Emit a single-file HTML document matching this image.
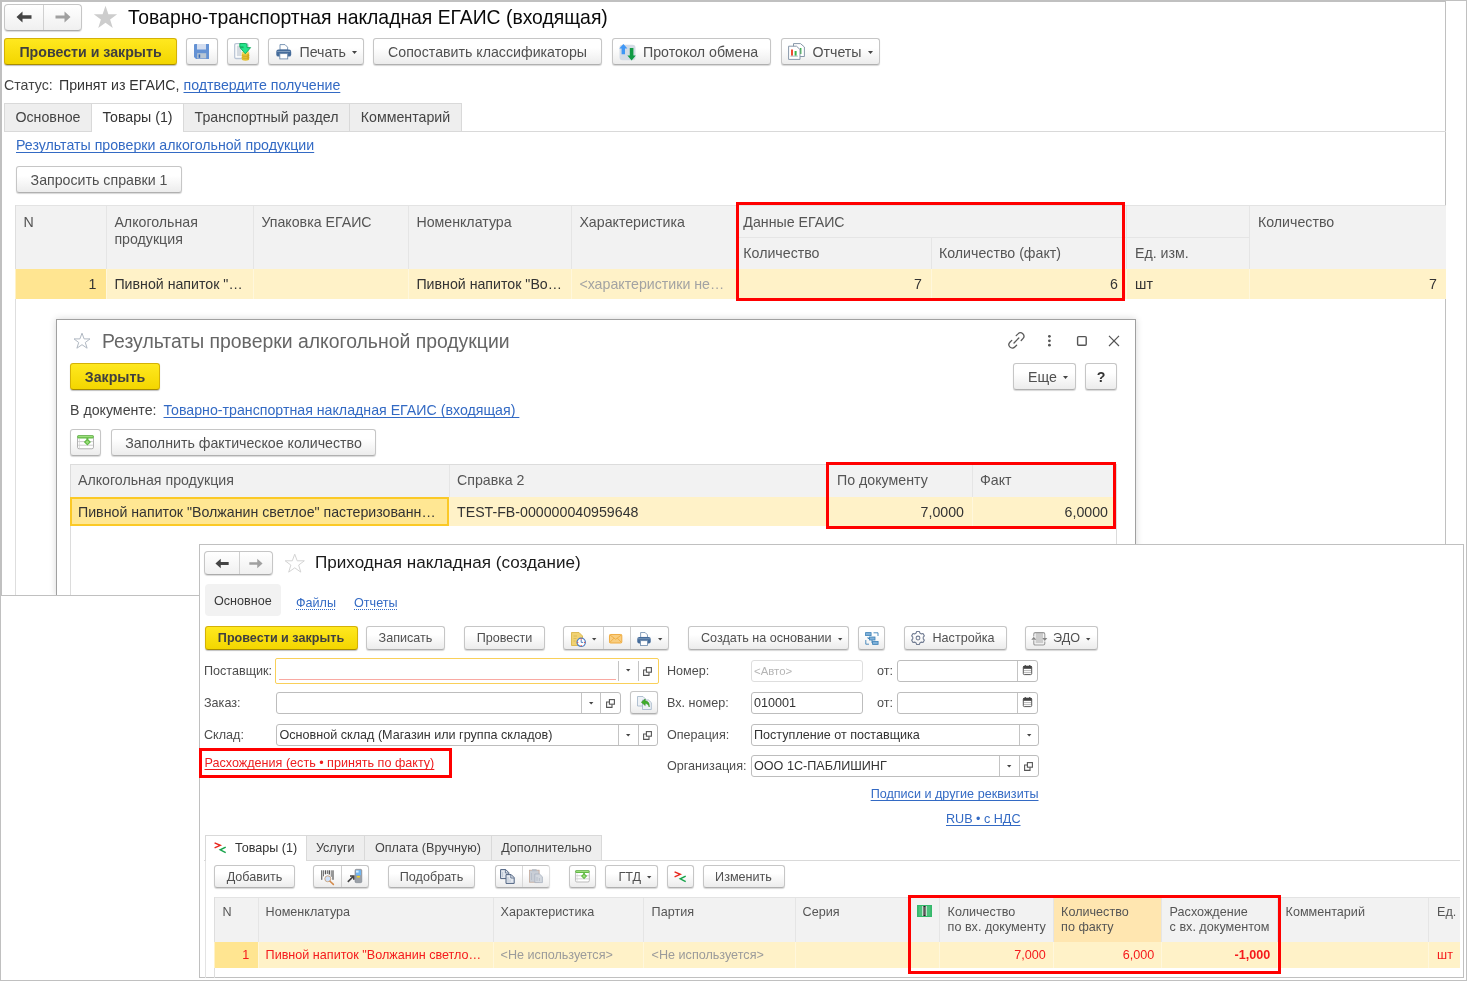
<!DOCTYPE html>
<html lang="ru">
<head>
<meta charset="utf-8">
<title>Товарно-транспортная накладная ЕГАИС (входящая)</title>
<style>
html,body{margin:0;padding:0;background:#fff;}
body{width:1467px;height:981px;overflow:hidden;font-family:"Liberation Sans",sans-serif;}
#root{will-change:transform;position:relative;width:1467px;height:981px;overflow:hidden;background:#fff;}
#root div{position:absolute;box-sizing:border-box;white-space:nowrap;}
#root svg{position:absolute;overflow:visible;}
.t{color:#333;}
.btn{border:1px solid #c6c6c6;border-bottom-color:#b0b0b0;border-radius:3px;background:linear-gradient(#ffffff 35%,#ececec);box-shadow:0 1px 1px rgba(0,0,0,.16);color:#505050;text-align:center;}
.ybtn{border:1px solid #d4b106;border-bottom-color:#a88c00;border-radius:3px;background:linear-gradient(#ffe81f,#f3d600);box-shadow:0 1px 1px rgba(0,0,0,.25);color:#3f3f3f;text-align:center;font-weight:bold;}
.lnk{text-decoration:underline;text-decoration-skip-ink:none;text-underline-offset:1.8px;text-decoration-thickness:1px;}
.dlnk{text-decoration:underline dotted;text-decoration-thickness:1px;text-decoration-skip-ink:none;text-underline-offset:2.3px;}
.inp{border:1px solid #bdbdbd;border-radius:3px;background:#fff;}
.tab{background:#eeeeee;border:1px solid #d9d9d9;text-align:center;color:#444;}
.tabA{background:#fff;border:1px solid #d9d9d9;border-bottom:none;text-align:center;color:#333;}
.red{border:3px solid #f00;}
</style>
</head>
<body>
<div id="root">
<div style="left:0px;top:0px;width:1467px;height:981px;background:#fff;"></div>
<div style="left:0px;top:0px;width:1446px;height:596px;background:#fff;border:1px solid #c0c0c0;border-left-width:2px;border-top-width:2px;"></div>
<div style="left:4px;top:4px;width:78px;height:27px;border:1px solid #c6c6c6;border-bottom-color:#ababab;border-radius:4px;background:linear-gradient(#fff,#f0f0f0);box-shadow:0 1px 1px rgba(0,0,0,.15);"></div>
<div style="left:43px;top:5px;width:1px;height:25px;background:#d0d0d0;"></div>
<svg style="left:16px;top:11px" width="17" height="12" viewBox="0 0 17 12"><path d="M0.5 6 L6.5 0.5 V4.2 H15.5 V7.8 H6.5 V11.5 Z" fill="#444"/></svg>
<svg style="left:54px;top:11px" width="17" height="12" viewBox="0 0 17 12"><path d="M16.5 6 L10.5 0.5 V4.6 H1.5 V7.4 H10.5 V11.5 Z" fill="#a0a0a0"/></svg>
<svg style="left:93px;top:5px" width="25" height="24" viewBox="0 0 25 24"><path d="M12.5 0.8 L15.4 9.2 H24.2 L17.1 14.4 L19.8 23 L12.5 17.8 L5.2 23 L7.9 14.4 L0.8 9.2 H9.6 Z" fill="#cdcdcd"/></svg>
<div class="t" style="left:128px;top:5.10px;font-size:19.35px;line-height:25px;color:#0a0a0a;">Товарно-транспортная накладная ЕГАИС (входящая)</div>
<div class="ybtn" style="left:4px;top:38px;width:173px;height:27px;line-height:26px;font-size:14.2px;">Провести и закрыть</div>
<div class="btn" style="left:186px;top:38px;width:32px;height:27px;line-height:26px;font-size:14.2px;"></div>
<svg style="left:194px;top:44px" width="15" height="15" viewBox="0 0 15 15"><path d="M0.5 0 H15 V15 H2 L0 13 V0.5 Z" fill="#6492d4"/><rect x="3" y="0" width="9" height="5.5" fill="#d3ddef"/><rect x="3.2" y="9.2" width="9" height="5.2" fill="#b9c6d3"/><rect x="4.6" y="10.4" width="1.6" height="3.4" fill="#3a6ab3"/></svg>
<div class="btn" style="left:227px;top:38px;width:32px;height:27px;line-height:26px;font-size:14.2px;"></div>
<svg style="left:233.8px;top:42.8px" width="17" height="18" viewBox="0 0 17 18"><rect x="0.7" y="0.7" width="13.2" height="14.8" rx="1.3" fill="#fff" stroke="#b9c5d5" stroke-width="1.3"/><rect x="2.8" y="2.6" width="4.6" height="10.6" fill="#d4dae1"/><path d="M7.8 9.8 V16 A3.7 1.7 0 0 0 15.2 16 V9.8 Z" fill="#e3c033"/><ellipse cx="11.5" cy="9.8" rx="3.7" ry="1.5" fill="#f3da66"/><path d="M7.8 12 A3.7 1.5 0 0 0 15.2 12 M7.8 14 A3.7 1.5 0 0 0 15.2 14" stroke="#c9a21c" stroke-width=".6" fill="none"/><rect x="13.4" y="10.5" width="1.4" height="6" fill="#c99a14" opacity=".6"/><path d="M5.8 0.5 H11.4 Q13 0.5 13 2.2 V4.6 H16.6 L11.3 10.8 L6 4.6 H9.3 V3.9 H5.8 Z" fill="#25e48c" stroke="#10a95a" stroke-width=".9" stroke-linejoin="round"/></svg>
<div class="btn" style="left:268px;top:38px;width:96px;height:27px;line-height:26px;font-size:14.2px;text-align:left;padding-left:30.5px;">Печать</div>
<svg style="left:276px;top:44px" width="15.5" height="15.5" viewBox="0 0 15.5 15.5"><path d="M4 6 V0.6 H9 L11.6 3.2 V6 Z" fill="#fff" stroke="#6d8bad" stroke-width=".9"/><rect x="0.3" y="5.6" width="14.9" height="7" rx="2.2" fill="#456c9b"/><rect x="1.2" y="7" width="13" height="1" fill="#7f9cbd"/><rect x="3.8" y="9.6" width="7.9" height="5.3" fill="#fff" stroke="#6d8bad" stroke-width=".9"/></svg>
<svg style="left:351.5px;top:51px" width="5" height="3" viewBox="0 0 5 3"><path d="M0 0 H5 L2.5 3 Z" fill="#444"/></svg>
<div class="btn" style="left:373px;top:38px;width:229px;height:27px;line-height:26px;font-size:14.2px;">Сопоставить классификаторы</div>
<div class="btn" style="left:612px;top:38px;width:159px;height:27px;line-height:26px;font-size:14.2px;text-align:left;padding-left:30px;">Протокол обмена</div>
<svg style="left:618.6px;top:43.6px" width="17" height="17" viewBox="0 0 17 17"><rect x="0.5" y="0.8" width="16" height="15.5" rx="3" fill="#d3dbe5"/><path d="M4.4 0 L8.4 4.6 H6 V10.2 H2.6 V4.6 H0.3 Z" fill="#3f97f6"/><path d="M12.6 16.6 L8.4 11.6 H10.8 V4 H14.4 V11.6 H16.8 Z" fill="#119b45"/></svg>
<div class="btn" style="left:781px;top:38px;width:99px;height:27px;line-height:26px;font-size:14.2px;text-align:left;padding-left:30.5px;">Отчеты</div>
<svg style="left:788px;top:43.4px" width="17" height="17" viewBox="0 0 17 17"><path d="M5.5 0.6 H12.5 L16.4 4 V13.5 H5.5 Z" fill="#fff" stroke="#8797a8" stroke-width="1"/><rect x="12" y="5" width="1.4" height="6" fill="#3db54a"/><path d="M0.6 3.2 H8.5 L12 6.5 V16.4 H0.6 Z" fill="#fff" stroke="#8797a8" stroke-width="1"/><rect x="3" y="6.5" width="2" height="6.2" fill="#ee4b32"/><rect x="6.6" y="8" width="2" height="4.7" fill="#3db54a"/><rect x="2.4" y="12.7" width="7.5" height=".8" fill="#9aa"/></svg>
<svg style="left:867.6px;top:51px" width="5" height="3" viewBox="0 0 5 3"><path d="M0 0 H5 L2.5 3 Z" fill="#444"/></svg>
<div class="t" style="left:4px;top:75.58px;font-size:14.2px;line-height:18px;color:#444;">Статус:</div>
<div class="t" style="left:59px;top:75.58px;font-size:14.2px;line-height:18px;color:#333;">Принят из ЕГАИС,</div>
<div class="t lnk" style="left:183.5px;top:75.58px;font-size:14.2px;line-height:18px;color:#336ac4;">подтвердите получение</div>
<div style="left:4px;top:131px;width:1442px;height:1px;background:#d9d9d9;"></div>
<div class="tab" style="left:4px;top:103px;width:88px;height:29px;line-height:27px;font-size:14.2px;">Основное</div>
<div class="tabA" style="left:91px;top:103px;width:93px;height:29px;line-height:27px;font-size:14.2px;">Товары (1)</div>
<div class="tab" style="left:183px;top:103px;width:167px;height:29px;line-height:27px;font-size:14.2px;">Транспортный раздел</div>
<div class="tab" style="left:349px;top:103px;width:113px;height:29px;line-height:27px;font-size:14.2px;">Комментарий</div>
<div class="t lnk" style="left:16px;top:135.58px;font-size:14.2px;line-height:18px;color:#336ac4;">Результаты проверки алкогольной продукции</div>
<div class="btn" style="left:16px;top:166px;width:166px;height:27px;line-height:26px;font-size:14.2px;">Запросить справки 1</div>
<div style="left:15px;top:205px;width:1431px;height:64px;background:#f2f2f2;border-top:1px solid #e3e3e3;"></div>
<div style="left:15px;top:205px;width:1px;height:391px;background:#dedede;"></div>
<div style="left:15px;top:269px;width:1431px;height:30px;background:#fff2c8;"></div>
<div style="left:16px;top:269px;width:90px;height:30px;background:#ffe591;"></div>
<div style="left:106px;top:206px;width:1px;height:63px;background:#e5e5e5;"></div>
<div style="left:106px;top:269px;width:1px;height:30px;background:#fff7dc;"></div>
<div style="left:253px;top:206px;width:1px;height:63px;background:#e5e5e5;"></div>
<div style="left:253px;top:269px;width:1px;height:30px;background:#fff7dc;"></div>
<div style="left:408px;top:206px;width:1px;height:63px;background:#e5e5e5;"></div>
<div style="left:408px;top:269px;width:1px;height:30px;background:#fff7dc;"></div>
<div style="left:571px;top:206px;width:1px;height:63px;background:#e5e5e5;"></div>
<div style="left:571px;top:269px;width:1px;height:30px;background:#fff7dc;"></div>
<div style="left:737px;top:206px;width:1px;height:63px;background:#e5e5e5;"></div>
<div style="left:737px;top:269px;width:1px;height:30px;background:#fff7dc;"></div>
<div style="left:1126px;top:206px;width:1px;height:63px;background:#e5e5e5;"></div>
<div style="left:1126px;top:269px;width:1px;height:30px;background:#fff7dc;"></div>
<div style="left:1249px;top:206px;width:1px;height:63px;background:#e5e5e5;"></div>
<div style="left:1249px;top:269px;width:1px;height:30px;background:#fff7dc;"></div>
<div style="left:931px;top:237px;width:1px;height:32px;background:#e5e5e5;"></div>
<div style="left:931px;top:269px;width:1px;height:30px;background:#fff7dc;"></div>
<div style="left:737px;top:237px;width:512px;height:1px;background:#e5e5e5;"></div>
<div class="t" style="left:23.4px;top:212.98px;font-size:14.2px;line-height:18px;color:#555;">N</div>
<div class="t" style="left:114.4px;top:212.98px;font-size:14.2px;line-height:18px;color:#555;">Алкогольная</div>
<div class="t" style="left:114.4px;top:230.18px;font-size:14.2px;line-height:18px;color:#555;">продукция</div>
<div class="t" style="left:261.4px;top:212.98px;font-size:14.2px;line-height:18px;color:#555;">Упаковка ЕГАИС</div>
<div class="t" style="left:416.4px;top:212.98px;font-size:14.2px;line-height:18px;color:#555;">Номенклатура</div>
<div class="t" style="left:579.4px;top:212.98px;font-size:14.2px;line-height:18px;color:#555;">Характеристика</div>
<div class="t" style="left:743.3px;top:212.98px;font-size:14.2px;line-height:18px;color:#555;">Данные ЕГАИС</div>
<div class="t" style="left:743.3px;top:244.48px;font-size:14.2px;line-height:18px;color:#555;">Количество</div>
<div class="t" style="left:939px;top:244.48px;font-size:14.2px;line-height:18px;color:#555;">Количество (факт)</div>
<div class="t" style="left:1135px;top:244.48px;font-size:14.2px;line-height:18px;color:#555;">Ед. изм.</div>
<div class="t" style="left:1258px;top:212.98px;font-size:14.2px;line-height:18px;color:#555;">Количество</div>
<div class="t" style="right:1370.5px;top:275.18px;font-size:14.2px;line-height:18px;color:#333;">1</div>
<div class="t" style="left:114.4px;top:275.18px;font-size:14.2px;line-height:18px;color:#333;">Пивной напиток "…</div>
<div class="t" style="left:416.4px;top:275.18px;font-size:14.2px;line-height:18px;color:#333;">Пивной напиток "Во…</div>
<div class="t" style="left:579.4px;top:275.18px;font-size:14.2px;line-height:18px;color:#a3a3a3;">&lt;характеристики не…</div>
<div class="t" style="right:545px;top:275.18px;font-size:14.2px;line-height:18px;color:#333;">7</div>
<div class="t" style="right:349px;top:275.18px;font-size:14.2px;line-height:18px;color:#333;">6</div>
<div class="t" style="left:1135px;top:275.18px;font-size:14.2px;line-height:18px;color:#333;">шт</div>
<div class="t" style="right:30px;top:275.18px;font-size:14.2px;line-height:18px;color:#333;">7</div>
<div class="red" style="left:736px;top:202px;width:389px;height:99px;"></div>
<div style="left:56px;top:319px;width:1080px;height:277px;background:#fff;border:1px solid #a0a0a0;border-bottom:none;box-shadow:0 0 7px rgba(0,0,0,.16);"></div>
<svg style="left:73px;top:332px" width="18" height="17" viewBox="0 0 18 17"><path d="M9 1.2 L11.1 6.9 H17 L12.3 10.5 L14.1 16.2 L9 12.7 L3.9 16.2 L5.7 10.5 L1 6.9 H6.9 Z" fill="none" stroke="#b0b8c2" stroke-width="1"/></svg>
<div class="t" style="left:102px;top:328.78px;font-size:19.4px;line-height:25px;color:#666;">Результаты проверки алкогольной продукции</div>
<div class="ybtn" style="left:70px;top:363px;width:90px;height:27px;line-height:26px;font-size:14.2px;">Закрыть</div>
<div class="btn" style="left:1013px;top:363px;width:63px;height:27px;line-height:26px;font-size:14.2px;text-align:left;padding-left:14px;">Еще</div>
<svg style="left:1063.4px;top:376px" width="5" height="3" viewBox="0 0 5 3"><path d="M0 0 H5 L2.5 3 Z" fill="#444"/></svg>
<svg style="left:1008px;top:332px" width="17" height="17" viewBox="0 0 17 17"><g fill="none" stroke="#5a5a5a" stroke-width="1.3" stroke-linecap="round"><path d="M8.2 3.6 L10 1.9 A3.2 3.2 0 0 1 14.9 6.6 L13.2 8.5"/><path d="M8.6 13.3 L6.8 15 A3.2 3.2 0 0 1 1.9 10.3 L3.8 8.4"/><path d="M6 11 L10.8 6"/></g></svg>
<svg style="left:1047px;top:334px" width="5" height="13" viewBox="0 0 5 13"><circle cx="2.4" cy="2.3" r="1.4" fill="#555"/><circle cx="2.4" cy="6.8" r="1.4" fill="#555"/><circle cx="2.4" cy="11.2" r="1.4" fill="#555"/></svg>
<svg style="left:1076px;top:335px" width="12" height="12" viewBox="0 0 12 12"><rect x="1.6" y="1.6" width="8.6" height="8.6" rx="1" fill="none" stroke="#555" stroke-width="1.4"/></svg>
<svg style="left:1108px;top:335px" width="12" height="12" viewBox="0 0 12 12"><path d="M1 0.8 L11 11 M11 0.8 L1 11" stroke="#555" stroke-width="1.2" fill="none"/></svg>
<div class="btn" style="left:1085px;top:363px;width:32px;height:27px;line-height:26px;font-size:14.2px;font-weight:bold;color:#333;">?</div>
<div class="t" style="left:70px;top:400.58px;font-size:14.2px;line-height:18px;color:#444;">В документе:</div>
<div class="t lnk" style="left:163.5px;top:400.58px;font-size:14.2px;line-height:18px;color:#336ac4;white-space:pre;">Товарно-транспортная накладная ЕГАИС (входящая) </div>
<div class="btn" style="left:70px;top:429px;width:31px;height:27px;line-height:26px;font-size:14.2px;"></div>
<svg style="left:77px;top:435.4px" width="17.0" height="14.4" viewBox="0 0 17 14.4"><rect x="0.5" y="0.6" width="16" height="13.2" rx="1.6" fill="#fff" stroke="#a9a9a9" stroke-width=".9"/><path d="M1.2 6.6 H15.8 M1.2 10.2 H15.8" stroke="#c4c4c4" stroke-width=".9"/><path d="M2.4 4 V13" stroke="#d0d0d0" stroke-width=".7"/><rect x="0.2" y="0.2" width="16.6" height="3.2" rx="1.3" fill="#62b946"/><rect x="1.2" y="1.1" width="14.6" height="1.1" rx=".5" fill="#9de07c"/><path d="M9.4 3 H11.4 V4.6 L14 7 L10.4 10.6 L6.8 7 L9.4 4.6 Z" fill="#62b946"/><path d="M10.4 5.4 L12.3 7.1 L10.4 9 L8.5 7.1 Z" fill="#9de07c"/></svg>
<div class="btn" style="left:111px;top:429px;width:265px;height:27px;line-height:26px;font-size:14.2px;">Заполнить фактическое количество</div>
<div style="left:70px;top:464px;width:1047px;height:132px;border:1px solid #dcdcdc;border-bottom:none;background:#fff;"></div>
<div style="left:71px;top:465px;width:1045px;height:32px;background:#f2f2f2;"></div>
<div style="left:71px;top:497px;width:1045px;height:29px;background:#fff2c8;"></div>
<div style="left:70px;top:497px;width:379px;height:29px;background:#ffe793;border:2px solid #fbc926;"></div>
<div style="left:449px;top:465px;width:1px;height:32px;background:#e5e5e5;"></div>
<div style="left:828px;top:465px;width:1px;height:32px;background:#e5e5e5;"></div>
<div style="left:828px;top:497px;width:1px;height:29px;background:#fff7dc;"></div>
<div style="left:972px;top:465px;width:1px;height:32px;background:#e5e5e5;"></div>
<div style="left:972px;top:497px;width:1px;height:29px;background:#fff7dc;"></div>
<div class="t" style="left:78px;top:471.08px;font-size:14.2px;line-height:18px;color:#555;">Алкогольная продукция</div>
<div class="t" style="left:457px;top:471.08px;font-size:14.2px;line-height:18px;color:#555;">Справка 2</div>
<div class="t" style="left:837px;top:471.08px;font-size:14.2px;line-height:18px;color:#555;">По документу</div>
<div class="t" style="left:980px;top:471.08px;font-size:14.2px;line-height:18px;color:#555;">Факт</div>
<div class="t" style="left:78px;top:503.08px;font-size:14.2px;line-height:18px;color:#333;">Пивной напиток "Волжанин светлое" пастеризованн…</div>
<div class="t" style="left:457px;top:503.08px;font-size:14.2px;line-height:18px;color:#333;">TEST-FB-000000040959648</div>
<div class="t" style="right:503px;top:503.08px;font-size:14.2px;line-height:18px;color:#333;">7,0000</div>
<div class="t" style="right:359px;top:503.08px;font-size:14.2px;line-height:18px;color:#333;">6,0000</div>
<div class="red" style="left:826px;top:462px;width:290px;height:67px;"></div>
<div style="left:0px;top:596px;width:200px;height:385px;background:#fff;"></div>
<div style="left:0px;top:595px;width:200px;height:1px;background:#c0c0c0;"></div>
<div style="left:199px;top:544px;width:1265px;height:434px;background:#fff;border:1px solid #c0c0c0;"></div>
<div style="left:204px;top:551px;width:69px;height:24px;border:1px solid #c6c6c6;border-bottom-color:#ababab;border-radius:4px;background:linear-gradient(#fff,#f0f0f0);box-shadow:0 1px 1px rgba(0,0,0,.15);"></div>
<div style="left:239px;top:552px;width:1px;height:22px;background:#d0d0d0;"></div>
<svg style="left:215px;top:557.5px" width="15" height="11" viewBox="0 0 17 12"><path d="M0.5 6 L6.5 0.5 V4.2 H15.5 V7.8 H6.5 V11.5 Z" fill="#444"/></svg>
<svg style="left:248px;top:557.5px" width="15" height="11" viewBox="0 0 17 12"><path d="M16.5 6 L10.5 0.5 V4.6 H1.5 V7.4 H10.5 V11.5 Z" fill="#a0a0a0"/></svg>
<svg style="left:283.5px;top:553px" width="21.5" height="20.5" viewBox="0 0 22 21"><path d="M11 1.2 L13.5 8 H20.8 L15 12.4 L17.2 19.6 L11 15.2 L4.8 19.6 L7 12.4 L1.2 8 H8.5 Z" fill="none" stroke="#d2d2d2" stroke-width="1"/></svg>
<div class="t" style="left:315px;top:551.67px;font-size:17.1px;line-height:22px;color:#1a1a1a;">Приходная накладная (создание)</div>
<div style="left:204.5px;top:584px;width:76.0px;height:32px;background:#f2f2f2;border-radius:4px;"></div>
<div class="t" style="left:214px;top:592.63px;font-size:12.6px;line-height:16px;color:#3a3a3a;">Основное</div>
<div class="t dlnk" style="left:296px;top:594.63px;font-size:12.6px;line-height:16px;color:#336ac4;">Файлы</div>
<div class="t dlnk" style="left:354px;top:594.63px;font-size:12.6px;line-height:16px;color:#336ac4;">Отчеты</div>
<div class="ybtn" style="left:204.5px;top:626px;width:153.0px;height:24px;line-height:23px;font-size:12.6px;">Провести и закрыть</div>
<div class="btn" style="left:366px;top:626px;width:79px;height:24px;line-height:23px;font-size:12.6px;">Записать</div>
<div class="btn" style="left:464px;top:626px;width:81px;height:24px;line-height:23px;font-size:12.6px;">Провести</div>
<div class="btn" style="left:563px;top:626px;width:106px;height:24px;line-height:23px;font-size:12.6px;"></div>
<div style="left:602.5px;top:627px;width:1.0px;height:22px;background:#cfcfcf;"></div>
<div style="left:630px;top:627px;width:1px;height:22px;background:#cfcfcf;"></div>
<svg style="left:571px;top:631.5px" width="15" height="15" viewBox="0 0 15 15"><path d="M0.5 0.5 H8 L11.5 4 V13.5 H0.5 Z" fill="#f1d272" stroke="#d9b64a" stroke-width=".9"/><path d="M2.5 4 H6 M2.5 6.5 H5.5 M2.5 9 H4.5" stroke="#d6b550" stroke-width=".8"/><circle cx="10.2" cy="10.3" r="4.2" fill="#fff" stroke="#4f7fc0" stroke-width="1.2"/><path d="M10.2 7.6 V10.4 H12.2" stroke="#4f7fc0" stroke-width="1" fill="none"/><g fill="#e53935"><circle cx="10.2" cy="6.9" r=".6"/><circle cx="10.2" cy="13.7" r=".6"/><circle cx="6.8" cy="10.3" r=".6"/><circle cx="13.6" cy="10.3" r=".6"/></g></svg>
<svg style="left:591.8px;top:638.3px" width="4.4" height="2.6" viewBox="0 0 4.4 2.6"><path d="M0 0 H4.4 L2.2 2.6 Z" fill="#444"/></svg>
<svg style="left:609px;top:633.5px" width="13.3" height="9.5" viewBox="0 0 14 10"><rect x="0.5" y="0.5" width="13" height="9" rx="1.2" fill="#f8cd80" stroke="#eeaa3c" stroke-width="1"/><path d="M0.8 0.9 L7 5.6 L13.2 0.9 M0.8 9 L5.2 4.4 M13.2 9 L8.8 4.4" fill="none" stroke="#eeaa3c" stroke-width=".9"/></svg>
<svg style="left:636.5px;top:632px" width="14.0" height="14.0" viewBox="0 0 15.5 15.5"><path d="M4 6 V0.6 H9 L11.6 3.2 V6 Z" fill="#fff" stroke="#6d8bad" stroke-width=".9"/><rect x="0.3" y="5.6" width="14.9" height="7" rx="2.2" fill="#456c9b"/><rect x="1.2" y="7" width="13" height="1" fill="#7f9cbd"/><rect x="3.8" y="9.6" width="7.9" height="5.3" fill="#fff" stroke="#6d8bad" stroke-width=".9"/></svg>
<svg style="left:658.2px;top:638.3px" width="4.4" height="2.6" viewBox="0 0 4.4 2.6"><path d="M0 0 H4.4 L2.2 2.6 Z" fill="#444"/></svg>
<div class="btn" style="left:688px;top:626px;width:161px;height:24px;line-height:23px;font-size:12.6px;text-align:left;padding-left:12px;">Создать на основании</div>
<svg style="left:838px;top:638.3px" width="4.4" height="2.6" viewBox="0 0 4.4 2.6"><path d="M0 0 H4.4 L2.2 2.6 Z" fill="#444"/></svg>
<div class="btn" style="left:858px;top:626px;width:27px;height:24px;line-height:23px;font-size:14.2px;"></div>
<svg style="left:864.6px;top:632px" width="14" height="13" viewBox="0 0 14 13"><g fill="#7fb0d8" stroke="#3d82b8" stroke-width=".8"><rect x="0.6" y="0.6" width="5.5" height="3"/><rect x="4.5" y="5" width="5.5" height="3"/><rect x="7.6" y="9.4" width="5.5" height="3"/></g><path d="M8.5 0.8 H13 V4 M3 5 V6.5 H4.5 M7 8 V11 H7.6 M0.8 8 V12.2 H4" fill="none" stroke="#3d82b8" stroke-width=".9"/></svg>
<div class="btn" style="left:904px;top:626px;width:103px;height:24px;line-height:23px;font-size:12.6px;text-align:left;padding-left:27.5px;">Настройка</div>
<svg style="left:911px;top:631.4px" width="14" height="14" viewBox="0 0 14 14"><path d="M5.13 2.04 L5.67 0.43 L8.33 0.43 L8.87 2.04 L10.36 2.90 L12.02 2.56 L13.35 4.87 L12.23 6.14 L12.23 7.86 L13.35 9.13 L12.02 11.44 L10.36 11.10 L8.87 11.96 L8.33 13.57 L5.67 13.57 L5.13 11.96 L3.64 11.10 L1.98 11.44 L0.65 9.13 L1.77 7.86 L1.77 6.14 L0.65 4.87 L1.98 2.56 L3.64 2.90 Z" fill="none" stroke="#737e94" stroke-width="1.1" stroke-linejoin="round"/><circle cx="7.0" cy="7.0" r="1.9" fill="none" stroke="#737e94" stroke-width="1.05"/></svg>
<div class="btn" style="left:1025px;top:626px;width:72.5px;height:24px;line-height:23px;font-size:12.6px;text-align:left;padding-left:27px;">ЭДО</div>
<svg style="left:1032px;top:631.7px" width="14.6" height="13.6" viewBox="0 0 14.6 13.6"><rect x="3.6" y="0.7" width="7.6" height="10.4" fill="#cccccc"/><path d="M3.4 0.6 H11.2 Q12.8 0.6 12.8 2.2 V6.4 M12.8 9.4 V11.4 Q12.8 13 11.2 13 H3.4 Q1.8 13 1.8 11.4 V8.2 M1.8 4.6 V2.2 Q1.8 0.6 3.4 0.6" fill="none" stroke="#9a9a9a" stroke-width="1.1"/><path d="M-0.7 7.7 L1.8 4.8 L4.3 7.7 Z M10.3 6 L12.8 8.9 L15.3 6 Z" fill="#858585"/></svg>
<svg style="left:1086.4px;top:638.3px" width="4.4" height="2.6" viewBox="0 0 4.4 2.6"><path d="M0 0 H4.4 L2.2 2.6 Z" fill="#444"/></svg>
<div class="t" style="left:204px;top:662.63px;font-size:12.6px;line-height:16px;color:#4d4d4d;">Поставщик:</div>
<div style="left:275px;top:657.5px;width:384px;height:26.5px;border:1.5px solid #f9d05a;border-radius:2px;background:#fff;"></div>
<div style="left:279px;top:679px;width:337px;height:1px;background:#f9a9a2;"></div>
<div style="left:618px;top:661px;width:1px;height:20px;background:#c4c4c4;"></div>
<div style="left:637.5px;top:661px;width:1.0px;height:20px;background:#c4c4c4;"></div>
<svg style="left:626px;top:669.3px" width="4.4" height="2.6" viewBox="0 0 4.4 2.6"><path d="M0 0 H4.4 L2.2 2.6 Z" fill="#444"/></svg>
<svg style="left:643px;top:666.5px" width="9" height="9" viewBox="0 0 9 9"><g fill="none" stroke="#555" stroke-width="1.1"><rect x="3.4" y="0.6" width="5" height="4.6"/><path d="M3.2 3 H0.6 V8.4 H6 V5.4"/></g></svg>
<div class="t" style="left:667px;top:662.63px;font-size:12.6px;line-height:16px;color:#4d4d4d;">Номер:</div>
<div style="left:751px;top:660px;width:112px;height:22px;border:1px solid #dedede;border-radius:3px;background:#fff;"></div>
<div class="t" style="left:754px;top:663.55px;font-size:11.4px;line-height:15px;color:#b5b5b5;">&lt;Авто&gt;</div>
<div class="t" style="left:877px;top:662.93px;font-size:12.6px;line-height:16px;color:#4d4d4d;">от:</div>
<div class="inp" style="left:897px;top:660px;width:141px;height:22px;"></div>
<div style="left:1017px;top:661px;width:1px;height:20px;background:#c4c4c4;"></div>
<svg style="left:1022.8px;top:665.3px" width="9" height="10" viewBox="0 0 9 10"><rect x="0.3" y="1.2" width="8.4" height="8.4" rx="1" fill="#fff" stroke="#555" stroke-width="1"/><rect x="0.3" y="1" width="8.4" height="2.8" fill="#444"/><rect x="1.8" y="0" width="1" height="2" fill="#444"/><rect x="6.2" y="0" width="1" height="2" fill="#444"/><path d="M1 5.6 H8 M1 7.6 H8" stroke="#999" stroke-width=".7"/></svg>
<div class="t" style="left:204px;top:694.63px;font-size:12.6px;line-height:16px;color:#4d4d4d;">Заказ:</div>
<div class="inp" style="left:276px;top:692px;width:345px;height:22px;"></div>
<div style="left:581px;top:693px;width:1px;height:20px;background:#c4c4c4;"></div>
<div style="left:600px;top:693px;width:1px;height:20px;background:#c4c4c4;"></div>
<svg style="left:588.5px;top:701.5px" width="4.4" height="2.6" viewBox="0 0 4.4 2.6"><path d="M0 0 H4.4 L2.2 2.6 Z" fill="#444"/></svg>
<svg style="left:606px;top:698.6px" width="9" height="9" viewBox="0 0 9 9"><g fill="none" stroke="#555" stroke-width="1.1"><rect x="3.4" y="0.6" width="5" height="4.6"/><path d="M3.2 3 H0.6 V8.4 H6 V5.4"/></g></svg>
<div class="btn" style="left:630px;top:691px;width:28px;height:23px;line-height:22px;font-size:14.2px;"></div>
<svg style="left:636.5px;top:696px" width="15" height="14" viewBox="0 0 15 14"><path d="M0.5 0.5 H6 L8.5 3 V10 H0.5 Z" fill="#eef2f6" stroke="#9fb2c6" stroke-width=".8"/><path d="M5.5 4 H11.5 L14.3 6.6 V13.5 H5.5 Z" fill="#eef2f6" stroke="#9fb2c6" stroke-width=".8"/><path d="M4.3 6.2 L8.2 3 V5 C11.6 5 12.6 7.6 12.2 11 C11.6 8.8 10.6 7.6 8.2 7.6 V9.6 Z" fill="#3fae2a" stroke="#2a8a1c" stroke-width=".5"/></svg>
<div class="t" style="left:667px;top:694.63px;font-size:12.6px;line-height:16px;color:#4d4d4d;">Вх. номер:</div>
<div class="inp" style="left:751px;top:692px;width:112px;height:22px;"></div>
<div class="t" style="left:754px;top:694.63px;font-size:12.6px;line-height:16px;color:#333;">010001</div>
<div class="t" style="left:877px;top:694.93px;font-size:12.6px;line-height:16px;color:#4d4d4d;">от:</div>
<div class="inp" style="left:897px;top:692px;width:141px;height:22px;"></div>
<div style="left:1017px;top:693px;width:1px;height:20px;background:#c4c4c4;"></div>
<svg style="left:1022.8px;top:697.3px" width="9" height="10" viewBox="0 0 9 10"><rect x="0.3" y="1.2" width="8.4" height="8.4" rx="1" fill="#fff" stroke="#555" stroke-width="1"/><rect x="0.3" y="1" width="8.4" height="2.8" fill="#444"/><rect x="1.8" y="0" width="1" height="2" fill="#444"/><rect x="6.2" y="0" width="1" height="2" fill="#444"/><path d="M1 5.6 H8 M1 7.6 H8" stroke="#999" stroke-width=".7"/></svg>
<div class="t" style="left:204px;top:726.83px;font-size:12.6px;line-height:16px;color:#4d4d4d;">Склад:</div>
<div class="inp" style="left:276px;top:724px;width:382px;height:22px;"></div>
<div class="t" style="left:279.5px;top:726.83px;font-size:12.6px;line-height:16px;color:#333;">Основной склад (Магазин или группа складов)</div>
<div style="left:618px;top:725px;width:1px;height:20px;background:#c4c4c4;"></div>
<div style="left:637.5px;top:725px;width:1.0px;height:20px;background:#c4c4c4;"></div>
<svg style="left:626px;top:733.5px" width="4.4" height="2.6" viewBox="0 0 4.4 2.6"><path d="M0 0 H4.4 L2.2 2.6 Z" fill="#444"/></svg>
<svg style="left:643px;top:730.6px" width="9" height="9" viewBox="0 0 9 9"><g fill="none" stroke="#555" stroke-width="1.1"><rect x="3.4" y="0.6" width="5" height="4.6"/><path d="M3.2 3 H0.6 V8.4 H6 V5.4"/></g></svg>
<div class="t" style="left:667px;top:726.83px;font-size:12.6px;line-height:16px;color:#4d4d4d;">Операция:</div>
<div class="inp" style="left:751px;top:724px;width:288px;height:22px;"></div>
<div class="t" style="left:754px;top:726.83px;font-size:12.6px;line-height:16px;color:#333;">Поступление от поставщика</div>
<div style="left:1018.5px;top:725px;width:1.0px;height:20px;background:#c4c4c4;"></div>
<svg style="left:1026.6px;top:733.5px" width="4.4" height="2.6" viewBox="0 0 4.4 2.6"><path d="M0 0 H4.4 L2.2 2.6 Z" fill="#444"/></svg>
<div class="t lnk" style="left:204.5px;top:754.93px;font-size:12.6px;line-height:16px;color:#ee1c1e;">Расхождения (есть • принять по факту)</div>
<div class="red" style="left:199px;top:748px;width:253px;height:30px;"></div>
<div class="t" style="left:667px;top:757.93px;font-size:12.6px;line-height:16px;color:#4d4d4d;">Организация:</div>
<div class="inp" style="left:751px;top:755px;width:288px;height:22px;"></div>
<div class="t" style="left:754px;top:757.93px;font-size:12.6px;line-height:16px;color:#333;">ООО 1С-ПАБЛИШИНГ</div>
<div style="left:999px;top:756px;width:1px;height:20px;background:#c4c4c4;"></div>
<div style="left:1018.5px;top:756px;width:1.0px;height:20px;background:#c4c4c4;"></div>
<svg style="left:1007px;top:764.5px" width="4.4" height="2.6" viewBox="0 0 4.4 2.6"><path d="M0 0 H4.4 L2.2 2.6 Z" fill="#444"/></svg>
<svg style="left:1024.4px;top:761.6px" width="9" height="9" viewBox="0 0 9 9"><g fill="none" stroke="#555" stroke-width="1.1"><rect x="3.4" y="0.6" width="5" height="4.6"/><path d="M3.2 3 H0.6 V8.4 H6 V5.4"/></g></svg>
<div class="t" style="right:428.5px;top:786.03px;font-size:12.6px;line-height:16px;color:#336ac4;text-decoration:underline;text-decoration-skip-ink:none;text-underline-offset:1.6px;text-decoration-thickness:1px;">Подписи и другие реквизиты</div>
<div class="t" style="right:446.5px;top:810.63px;font-size:12.6px;line-height:16px;color:#336ac4;text-decoration:underline;text-decoration-skip-ink:none;text-underline-offset:1.6px;text-decoration-thickness:1px;">RUB • с НДС</div>
<div style="left:204px;top:860px;width:1256px;height:1px;background:#d9d9d9;"></div>
<div class="tabA" style="left:204.5px;top:835px;width:102.0px;height:26px;line-height:24px;font-size:12.6px;text-align:left;padding-left:29.5px;">Товары (1)</div>
<svg style="left:214.3px;top:842.2px" width="12.2" height="11.3" viewBox="0 0 12.5 11.5"><path d="M0.6 0.8 L6.4 3.4 L0.6 6" fill="none" stroke="#e8261c" stroke-width="1.5"/><path d="M12 5.2 L6.4 8 L12 10.8" fill="none" stroke="#17a34a" stroke-width="1.5"/></svg>
<div class="tab" style="left:305.5px;top:835px;width:59.5px;height:26px;line-height:24px;font-size:12.6px;">Услуги</div>
<div class="tab" style="left:364px;top:835px;width:128px;height:26px;line-height:24px;font-size:12.6px;">Оплата (Вручную)</div>
<div class="tab" style="left:491px;top:835px;width:111px;height:26px;line-height:24px;font-size:12.6px;">Дополнительно</div>
<div style="left:204.5px;top:861px;width:1.0px;height:117px;background:#e3e3e3;"></div>
<div class="btn" style="left:214px;top:865px;width:81px;height:23px;line-height:22px;font-size:12.6px;">Добавить</div>
<div class="btn" style="left:313px;top:865px;width:56px;height:23px;line-height:22px;font-size:14.2px;"></div>
<div style="left:341px;top:866px;width:1px;height:21px;background:#cfcfcf;"></div>
<svg style="left:320.5px;top:869.6px" width="14" height="15" viewBox="0 0 14 15"><g fill="#555"><rect x="0.2" y="0.3" width="1.1" height="9.5"/><rect x="2.2" y="0.3" width=".8" height="6"/><rect x="3.8" y="0.3" width="1.4" height="4"/><rect x="6" y="0.3" width=".8" height="3.6"/><rect x="7.6" y="0.3" width="1.4" height="4.2"/><rect x="9.8" y="0.3" width=".8" height="6.5"/><rect x="11.4" y="0.3" width="1.2" height="9.5"/></g><circle cx="6.8" cy="8.8" r="3" fill="#cfe2fb" stroke="#c9a98a" stroke-width="1"/><path d="M9 11.2 L12.4 14.4" stroke="#d48a4a" stroke-width="1.5" stroke-linecap="round"/></svg>
<svg style="left:347px;top:869.3px" width="15" height="14" viewBox="0 0 15 14"><rect x="8" y="0.3" width="6.8" height="13.4" rx="1.3" fill="#9aa0a8" stroke="#7d848d" stroke-width=".6"/><rect x="8.8" y="1.2" width="5.2" height="5" fill="#6fb6f2"/><rect x="9" y="1.6" width="2.6" height="2" fill="#d8edfd"/><rect x="9.8" y="7" width="3.2" height="1.6" rx=".5" fill="#f2d21e"/><path d="M0.8 12.8 L6.4 7.4 M3 7 H6.8 V10.8" fill="none" stroke="#444" stroke-width="1.6"/></svg>
<div class="btn" style="left:388px;top:865px;width:87px;height:23px;line-height:22px;font-size:12.6px;">Подобрать</div>
<div class="btn" style="left:494.5px;top:865px;width:55.5px;height:23px;line-height:22px;font-size:14.2px;border-right-color:#e0e0e0;"></div>
<div style="left:522px;top:866px;width:1px;height:21px;background:#d8d8d8;"></div>
<svg style="left:500px;top:868.5px" width="15" height="15" viewBox="0 0 15 15"><g fill="#e3e8ef" stroke="#4e6280" stroke-width="1"><path d="M0.6 0.6 H5.8 L8.8 3.6 V9.6 H0.6 Z"/><path d="M6 5.6 H11.2 L14.2 8.6 V14.4 H6 Z"/></g><path d="M5.4 0.8 V4 H8.6 M10.8 5.8 V9 H14" fill="none" stroke="#4e6280" stroke-width=".8"/><path d="M2.6 3 V8 M8 8 V13 M10 10.5 V13" stroke="#b9c4d2" stroke-width=".9"/></svg>
<svg style="left:528.6px;top:869.3px" width="14" height="14" viewBox="0 0 14 14"><rect x="0.5" y="1.2" width="9.6" height="12" fill="#c9ced6" stroke="#c2a89a" stroke-width=".8"/><rect x="3" y="0.2" width="4.6" height="2" fill="#b5bcc6"/><path d="M5.8 5 H10.5 L13.4 7.8 V13.6 H5.8 Z" fill="#d3d8df" stroke="#a9b3c0" stroke-width=".8"/><path d="M2.5 4 V11 M8 8 V12 M10.4 9 V12" stroke="#b2bac5" stroke-width=".8"/></svg>
<div class="btn" style="left:568.5px;top:865px;width:27.5px;height:23px;line-height:22px;font-size:14.2px;"></div>
<svg style="left:574.6px;top:869.6px" width="14.8" height="12.5" viewBox="0 0 17 14.4"><rect x="0.5" y="0.6" width="16" height="13.2" rx="1.6" fill="#fff" stroke="#a9a9a9" stroke-width=".9"/><path d="M1.2 6.6 H15.8 M1.2 10.2 H15.8" stroke="#c4c4c4" stroke-width=".9"/><path d="M2.4 4 V13" stroke="#d0d0d0" stroke-width=".7"/><rect x="0.2" y="0.2" width="16.6" height="3.2" rx="1.3" fill="#62b946"/><rect x="1.2" y="1.1" width="14.6" height="1.1" rx=".5" fill="#9de07c"/><path d="M9.4 3 H11.4 V4.6 L14 7 L10.4 10.6 L6.8 7 L9.4 4.6 Z" fill="#62b946"/><path d="M10.4 5.4 L12.3 7.1 L10.4 9 L8.5 7.1 Z" fill="#9de07c"/></svg>
<div class="btn" style="left:605px;top:865px;width:52.5px;height:23px;line-height:22px;font-size:12.6px;text-align:left;padding-left:12.5px;">ГТД</div>
<svg style="left:647.3px;top:875.8px" width="4.4" height="2.6" viewBox="0 0 4.4 2.6"><path d="M0 0 H4.4 L2.2 2.6 Z" fill="#444"/></svg>
<div class="btn" style="left:666.5px;top:865px;width:27.0px;height:23px;line-height:22px;font-size:14.2px;"></div>
<svg style="left:673.8px;top:870.8px" width="12.2" height="11.3" viewBox="0 0 12.5 11.5"><path d="M0.6 0.8 L6.4 3.4 L0.6 6" fill="none" stroke="#e8261c" stroke-width="1.5"/><path d="M12 5.2 L6.4 8 L12 10.8" fill="none" stroke="#17a34a" stroke-width="1.5"/></svg>
<div class="btn" style="left:702.5px;top:865px;width:82.0px;height:23px;line-height:22px;font-size:12.6px;">Изменить</div>
<div style="left:214px;top:897px;width:1246px;height:45px;background:#f2f2f2;border-top:1px solid #e3e3e3;"></div>
<div style="left:214px;top:897px;width:1px;height:81px;background:#dedede;"></div>
<div style="left:214px;top:942px;width:1246px;height:26px;background:#fff2c8;"></div>
<div style="left:215px;top:942px;width:43px;height:26px;background:#ffe591;"></div>
<div style="left:1053px;top:898px;width:108px;height:44px;background:#ffe6b0;"></div>
<div style="left:258px;top:898px;width:1px;height:44px;background:#e5e5e5;"></div>
<div style="left:258px;top:942px;width:1px;height:26px;background:#fff7dc;"></div>
<div style="left:493px;top:898px;width:1px;height:44px;background:#e5e5e5;"></div>
<div style="left:493px;top:942px;width:1px;height:26px;background:#fff7dc;"></div>
<div style="left:643px;top:898px;width:1px;height:44px;background:#e5e5e5;"></div>
<div style="left:643px;top:942px;width:1px;height:26px;background:#fff7dc;"></div>
<div style="left:795px;top:898px;width:1px;height:44px;background:#e5e5e5;"></div>
<div style="left:795px;top:942px;width:1px;height:26px;background:#fff7dc;"></div>
<div style="left:910px;top:898px;width:1px;height:44px;background:#e5e5e5;"></div>
<div style="left:910px;top:942px;width:1px;height:26px;background:#fff7dc;"></div>
<div style="left:939px;top:898px;width:1px;height:44px;background:#e5e5e5;"></div>
<div style="left:939px;top:942px;width:1px;height:26px;background:#fff7dc;"></div>
<div style="left:1053px;top:898px;width:1px;height:44px;background:#e5e5e5;"></div>
<div style="left:1053px;top:942px;width:1px;height:26px;background:#fff7dc;"></div>
<div style="left:1161px;top:898px;width:1px;height:44px;background:#e5e5e5;"></div>
<div style="left:1161px;top:942px;width:1px;height:26px;background:#fff7dc;"></div>
<div style="left:1277px;top:898px;width:1px;height:44px;background:#e5e5e5;"></div>
<div style="left:1277px;top:942px;width:1px;height:26px;background:#fff7dc;"></div>
<div style="left:1428px;top:898px;width:1px;height:44px;background:#e5e5e5;"></div>
<div style="left:1428px;top:942px;width:1px;height:26px;background:#fff7dc;"></div>
<svg style="left:916.5px;top:905px" width="15" height="12" viewBox="0 0 15 12"><rect x="0" y="0" width="15" height="12" fill="#35b86b"/><rect x="1.6" y="1.2" width="11.8" height="9.6" fill="#4cc27c"/><rect x="5.4" y="1" width="4.2" height="10" fill="#fff"/><rect x="6.3" y="1" width="2.4" height="10" fill="#222"/><path d="M6.3 3 H8.7 M6.3 5 H8.7 M6.3 7 H8.7 M6.3 9 H8.7" stroke="#ddd" stroke-width=".6"/></svg>
<div class="t" style="left:222.6px;top:903.63px;font-size:12.6px;line-height:16px;color:#555;">N</div>
<div class="t" style="left:265.6px;top:903.63px;font-size:12.6px;line-height:16px;color:#555;">Номенклатура</div>
<div class="t" style="left:500.6px;top:903.63px;font-size:12.6px;line-height:16px;color:#555;">Характеристика</div>
<div class="t" style="left:651.6px;top:903.63px;font-size:12.6px;line-height:16px;color:#555;">Партия</div>
<div class="t" style="left:802.6px;top:903.63px;font-size:12.6px;line-height:16px;color:#555;">Серия</div>
<div class="t" style="left:947.6px;top:903.63px;font-size:12.6px;line-height:16px;color:#555;">Количество</div>
<div class="t" style="left:947.6px;top:919.13px;font-size:12.6px;line-height:16px;color:#555;">по вх. документу</div>
<div class="t" style="left:1061.1px;top:903.63px;font-size:12.6px;line-height:16px;color:#555;">Количество</div>
<div class="t" style="left:1061.1px;top:919.13px;font-size:12.6px;line-height:16px;color:#555;">по факту</div>
<div class="t" style="left:1169.6px;top:903.63px;font-size:12.6px;line-height:16px;color:#555;">Расхождение</div>
<div class="t" style="left:1169.6px;top:919.13px;font-size:12.6px;line-height:16px;color:#555;">с вх. документом</div>
<div class="t" style="left:1285.6px;top:903.63px;font-size:12.6px;line-height:16px;color:#555;">Комментарий</div>
<div class="t" style="left:1437.1px;top:903.63px;font-size:12.6px;line-height:16px;color:#555;">Ед.</div>
<div class="t" style="right:1217.7px;top:946.93px;font-size:12.6px;line-height:16px;color:#f51a1c;">1</div>
<div class="t" style="left:265.6px;top:946.93px;font-size:12.6px;line-height:16px;color:#f51a1c;">Пивной напиток "Волжанин светло…</div>
<div class="t" style="left:500.6px;top:946.93px;font-size:12.6px;line-height:16px;color:#9b9b9b;">&lt;Не используется&gt;</div>
<div class="t" style="left:651.6px;top:946.93px;font-size:12.6px;line-height:16px;color:#9b9b9b;">&lt;Не используется&gt;</div>
<div class="t" style="right:421.20000000000005px;top:946.93px;font-size:12.6px;line-height:16px;color:#f51a1c;">7,000</div>
<div class="t" style="right:312.70000000000005px;top:946.93px;font-size:12.6px;line-height:16px;color:#f51a1c;">6,000</div>
<div class="t" style="right:196.70000000000005px;top:946.93px;font-size:12.6px;line-height:16px;color:#f51a1c;font-weight:bold;">-1,000</div>
<div class="t" style="left:1437.1px;top:946.93px;font-size:12.6px;line-height:16px;color:#f51a1c;">шт</div>
<div class="red" style="left:908px;top:895px;width:373px;height:79px;"></div>
<div style="left:0px;top:0px;width:2px;height:596px;background:#c0c0c0;"></div>
<div style="left:0px;top:596px;width:1px;height:385px;background:#c0c0c0;"></div>
<div style="left:0px;top:980px;width:1467px;height:1px;background:#c0c0c0;"></div>
<div style="left:1466px;top:0px;width:1px;height:981px;background:#c0c0c0;"></div>
<div style="left:1445px;top:0px;width:22px;height:1px;background:#c0c0c0;"></div>
</div>
</body>
</html>
